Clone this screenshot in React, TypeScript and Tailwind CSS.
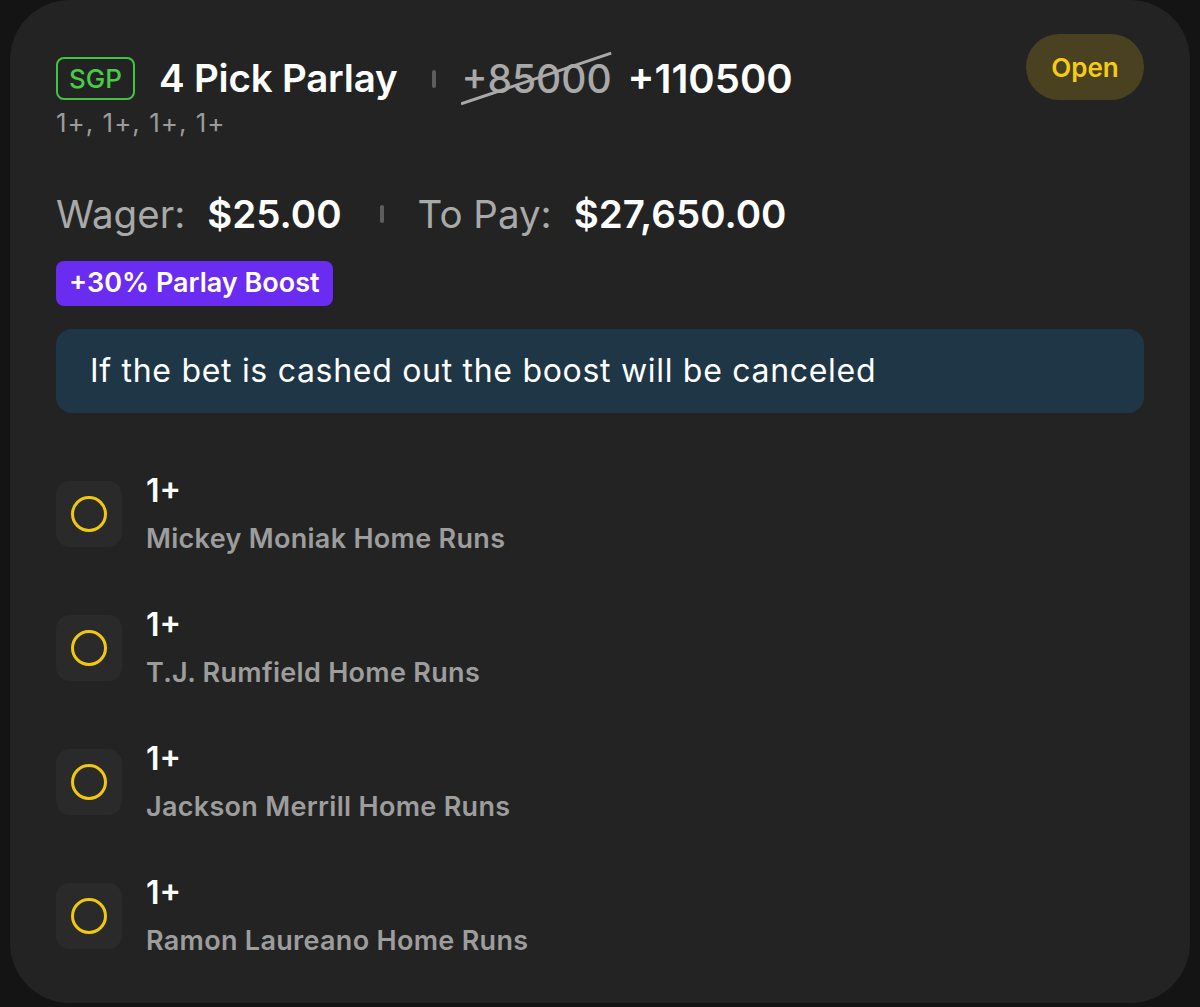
import React from "react";

const picks = [
  "Mickey Moniak Home Runs",
  "T.J. Rumfield Home Runs",
  "Jackson Merrill Home Runs",
  "Ramon Laureano Home Runs",
];

export default function App() {
  return (
    <div
      className="min-h-screen w-full bg-[#141414] px-[10px] pb-[4px]"
      style={{ fontFamily: "Inter, 'Noto Sans', sans-serif" }}
    >
      <div className="h-[1003px] rounded-[60px] bg-[#232323] px-[46px] pt-[34px]">
        <div className="flex items-start justify-between">
          <div className="pt-[23px]">
            <div className="flex h-[43px] items-center">
              <div className="flex h-[43px] w-[79px] items-center justify-center rounded-[8px] border-2 border-[#3fc53f] text-[26px] font-medium text-[#47cc47]">
                SGP
              </div>
              <div className="ml-[24px] text-[38.5px] font-semibold leading-none tracking-[-0.2px] text-white">
                4 Pick Parlay
              </div>
              <div className="ml-[35px] h-[18px] w-[4px] rounded-full bg-[#5e5e5e]" />
              <div className="relative ml-[25px] text-[39px] font-medium leading-none text-[#a9a9a9]">
                +85000
                <svg
                  className="absolute left-0 top-[-8px] h-[calc(100%+16px)] w-full"
                  viewBox="0 0 100 100"
                  preserveAspectRatio="none"
                >
                  <line
                    x1="0"
                    y1="96"
                    x2="100"
                    y2="4"
                    stroke="#a9a9a9"
                    strokeWidth="3"
                    vectorEffect="non-scaling-stroke"
                  />
                </svg>
              </div>
              <div className="ml-[16px] text-[40px] font-semibold leading-none text-white">
                +110500
              </div>
            </div>
            <div className="mt-[9px] text-[26px] leading-[28px] tracking-[1px] text-[#9b9b9b]">
              1+, 1+, 1+, 1+
            </div>
          </div>
          <div className="flex h-[66px] w-[118px] items-center justify-center rounded-full bg-[#4a4120] text-[26px] font-semibold text-[#f5cc14]">
            Open
          </div>
        </div>

        <div className="mt-[54px] flex items-center text-[38.5px] leading-[46px]">
          <span className="text-[#a9a9a9]">Wager:</span>
          <span className="ml-[22px] font-semibold text-white">$25.00</span>
          <span className="ml-[38px] h-[18px] w-[4px] rounded-full bg-[#5e5e5e]" />
          <span className="ml-[34px] text-[#a9a9a9]">To Pay:</span>
          <span className="ml-[22px] font-semibold text-white">$27,650.00</span>
        </div>

        <div className="mt-[24px] inline-flex h-[45px] items-center rounded-[8px] bg-[#6a2cf0] px-[13px] text-[27px] font-semibold text-white">
          +30% Parlay Boost
        </div>

        <div className="mt-[23px] flex h-[84px] items-center rounded-[16px] bg-[#1f3647] px-[34px] text-[32px] tracking-[0.7px] text-white">
          If the bet is cashed out the boost will be canceled
        </div>

        <div className="mt-[58px] flex flex-col gap-[48px]">
          {picks.map((p) => (
            <div key={p} className="flex h-[86px] items-center">
              <div className="flex h-[66px] w-[66px] items-center justify-center rounded-[14px] bg-[#2a2a2a]">
                <div className="h-[36px] w-[36px] rounded-full border-[3px] border-[#f2c80f]" />
              </div>
              <div className="ml-[24px] flex flex-col">
                <div className="text-[32px] font-semibold leading-[38px] text-white">1+</div>
                <div className="mt-[12px] text-[27px] font-semibold leading-[34px] tracking-[0.3px] text-[#9d9d9d]">
                  {p}
                </div>
              </div>
            </div>
          ))}
        </div>
      </div>
    </div>
  );
}
